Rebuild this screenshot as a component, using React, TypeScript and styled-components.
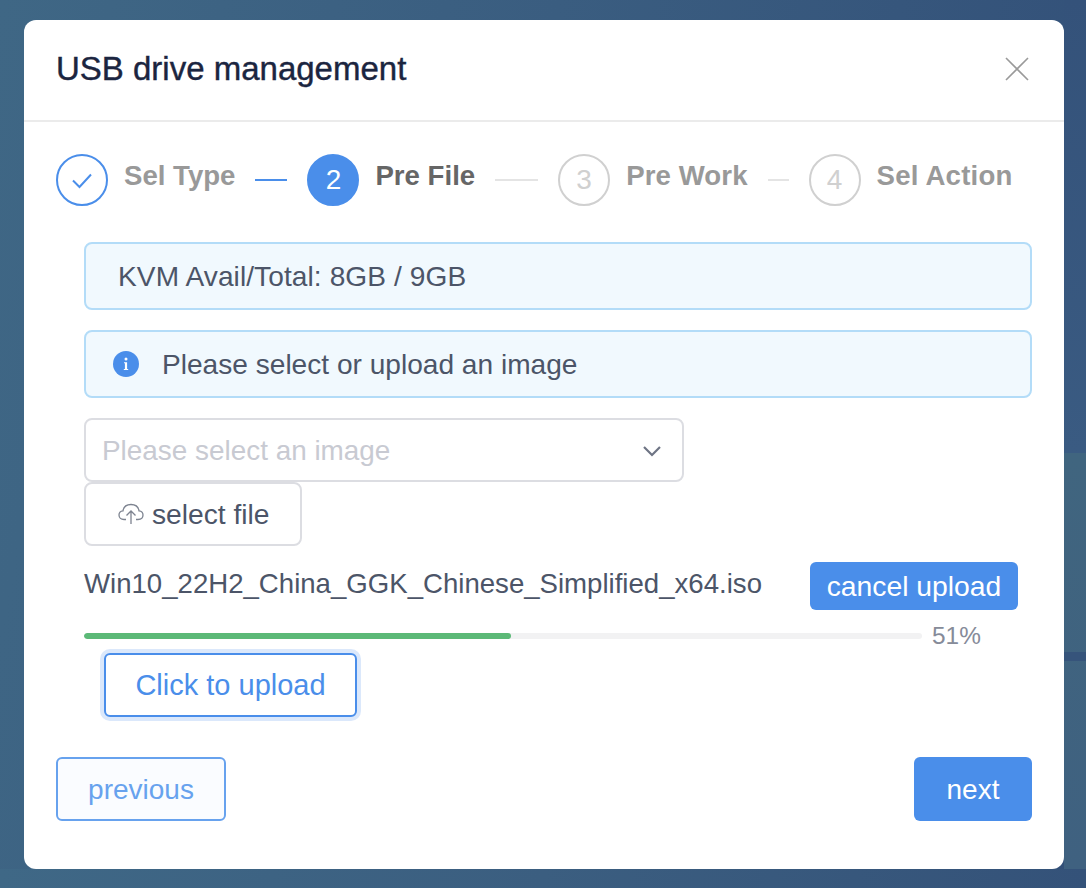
import React from "react";
import styled, { createGlobalStyle } from "styled-components";

const Global = createGlobalStyle`
  html, body { margin: 0; padding: 0; }
  body { font-family: "Liberation Sans", Arial, sans-serif; }
  * { box-sizing: border-box; }
`;

const Page = styled.div`
  width: 1086px;
  height: 888px;
  overflow: hidden;
  padding: 20px 22px 19px 24px;
  background:
    linear-gradient(#36547b, #36547b) right 0 top 652px / 22px 9px no-repeat,
    linear-gradient(180deg, #40657f, #3f6180) right 0 top 453px / 22px 416px no-repeat,
    linear-gradient(180deg, #34527a, #3a5b82) right 0 top 0 / 22px 453px no-repeat,
    linear-gradient(90deg, #3f6886 0%, #3b5e80 50%, #345279 100%) left 0 bottom 0 / 100% 19px no-repeat,
    linear-gradient(100deg, #3f6785 0%, #3a5d80 45%, #324f78 100%);
`;

const Modal = styled.div`
  width: 1040px;
  height: 849px;
  background: #fff;
  border-radius: 12px;
  display: flex;
  flex-direction: column;
`;

const Header = styled.header`
  height: 102px;
  flex: none;
  padding: 0 35px 0 32px;
  border-bottom: 2px solid #ebebeb;
  display: flex;
  align-items: center;
  justify-content: space-between;
`;

const Title = styled.h1`
  margin: 0 0 2px;
  font-size: 33px;
  font-weight: 500;
  line-height: 40px;
  color: #1b2540;
  -webkit-text-stroke: 0.4px #1b2540;
`;

const CloseIcon = styled.svg`
  width: 24px;
  height: 24px;
  margin-bottom: 3px;
  color: #9a9a9a;
`;

const Body = styled.div`
  flex: 1;
  display: flex;
  flex-direction: column;
  padding: 32px 32px 48px;
`;

const Steps = styled.ol`
  list-style: none;
  margin: 0;
  padding: 0;
  display: flex;
  align-items: flex-start;
  height: 52px;
`;

const Step = styled.li`
  display: flex;
  align-items: flex-start;
`;

const Circle = styled.span<{ $state: "done" | "active" | "todo" }>`
  width: 52px;
  height: 52px;
  flex: none;
  border-radius: 50%;
  display: flex;
  align-items: center;
  justify-content: center;
  font-size: 28px;
  color: ${p => (p.$state === "active" ? "#fff" : p.$state === "done" ? "#4a8eea" : "#d0d0d0")};
  background: ${p => (p.$state === "active" ? "#4a8eea" : "#fff")};
  border: 2px solid ${p => (p.$state === "todo" ? "#d0d0d0" : "#4a8eea")};
`;

const StepLabel = styled.span<{ $active?: boolean; $spacing?: number }>`
  margin-left: 16px;
  font-size: 27.6px;
  line-height: 44px;
  font-weight: 700;
  white-space: nowrap;
  letter-spacing: ${p => p.$spacing ?? 0}px;
  color: ${p => (p.$active ? "#666" : "#999")};
`;

const Connector = styled.span<{ $w: number; $done?: boolean }>`
  width: ${p => p.$w}px;
  height: 2px;
  margin: 25px 20px 0;
  flex: none;
  background: ${p => (p.$done ? "#4a8eea" : "#e4e4e4")};
`;

const Content = styled.div`
  margin-top: 36px;
  padding-left: 28px;
  display: flex;
  flex-direction: column;
  flex: 1;
`;

const Alert = styled.div<{ $icon?: boolean }>`
  height: 68px;
  margin-bottom: 20px;
  padding: 2px 0 0 ${p => (p.$icon ? 27 : 32)}px;
  display: flex;
  align-items: center;
  gap: 23px;
  font-size: 28.1px;
  letter-spacing: ${p => (p.$icon ? 0 : 0.08)}px;
  color: #4c5568;
  background: #f1f9fe;
  border: 2px solid #b3dcf8;
  border-radius: 8px;
`;

const InfoIcon = styled.svg`
  flex: none;
  margin-top: -2px;
`;

const Select = styled.div`
  width: 600px;
  height: 64px;
  padding: 2px 20px 0 16px;
  display: flex;
  align-items: center;
  justify-content: space-between;
  font-size: 27.9px;
  color: #c8cad2;
  background: #fff;
  border: 2px solid #dcdde2;
  border-radius: 8px;
`;

const FileButton = styled.button`
  width: 218px;
  height: 64px;
  padding: 0 0 0 32px;
  display: flex;
  align-items: center;
  gap: 8px;
  font: inherit;
  font-size: 28.2px;
  color: #4c5568;
  background: #fff;
  border: 2px solid #dcdde2;
  border-radius: 8px;
`;

const FileRow = styled.div`
  margin-top: 16px;
  display: flex;
  align-items: flex-start;
  justify-content: space-between;
  padding-right: 14px;
`;

const FileName = styled.span`
  font-size: 27.6px;
  line-height: 44px;
  color: #4c5568;
`;

const CancelButton = styled.button`
  width: 208px;
  height: 48px;
  padding: 0;
  border: 0;
  border-radius: 6px;
  font: inherit;
  font-size: 28.3px;
  color: #fff;
  background: #4a8eea;
`;

const ProgressRow = styled.div`
  height: 28px;
  margin-top: 12px;
  display: flex;
  align-items: center;
`;

const Track = styled.div`
  width: 838px;
  height: 6px;
  border-radius: 3px;
  background: #f2f2f3;
  overflow: hidden;
`;

const Fill = styled.div`
  height: 100%;
  border-radius: 3px;
  background: #5cb977;
`;

const Percent = styled.span`
  margin-left: 10px;
  font-size: 24.4px;
  color: #868b99;
`;

const UploadButton = styled.button`
  width: 253px;
  height: 64px;
  margin: 3px 0 0 20px;
  padding: 0;
  font: inherit;
  font-size: 29px;
  color: #4a8eea;
  background: #fff;
  border: 2px solid #4a8eea;
  border-radius: 6px;
  box-shadow: 0 0 0 4px #dbe8fb;
`;

const Footer = styled.footer`
  display: flex;
  justify-content: space-between;
  margin-top: auto;
`;

const PrevButton = styled.button`
  width: 170px;
  height: 64px;
  padding: 2px 0 0;
  font: inherit;
  font-size: 28px;
  color: #67a2ee;
  background: #fafcff;
  border: 2px solid #67a2ee;
  border-radius: 6px;
`;

const NextButton = styled.button`
  width: 118px;
  height: 64px;
  padding: 2px 0 0;
  border: 0;
  border-radius: 6px;
  font: inherit;
  font-size: 28px;
  color: #fff;
  background: #4a8eea;
`;

export default function App() {
  const progress = 51;
  return (
    <Page>
      <Global />
      <Modal>
        <Header>
          <Title>USB drive management</Title>
          <CloseIcon viewBox="0 0 24 24" fill="none" stroke="currentColor" strokeWidth="1.6">
            <path d="M1 1 L23 23 M23 1 L1 23" />
          </CloseIcon>
        </Header>
        <Body>
          <Steps>
            <Step>
              <Circle $state="done">
                <svg width="22" height="22" viewBox="0 0 22 22" fill="none" stroke="currentColor" strokeWidth="2">
                  <path d="M2 11.5 L8.5 18 L20 5.5" />
                </svg>
              </Circle>
              <StepLabel>Sel Type</StepLabel>
              <Connector $w={32} $done />
            </Step>
            <Step>
              <Circle $state="active">2</Circle>
              <StepLabel $active>Pre File</StepLabel>
              <Connector $w={43} />
            </Step>
            <Step>
              <Circle $state="todo">3</Circle>
              <StepLabel $spacing={0.1}>Pre Work</StepLabel>
              <Connector $w={21} />
            </Step>
            <Step>
              <Circle $state="todo">4</Circle>
              <StepLabel $spacing={0.2}>Sel Action</StepLabel>
            </Step>
          </Steps>
          <Content>
            <Alert>KVM Avail/Total: 8GB / 9GB</Alert>
            <Alert $icon>
              <InfoIcon width="26" height="26" viewBox="0 0 26 26">
                <circle cx="13" cy="13" r="13" fill="#4a8eea" />
                <circle cx="13" cy="8" r="1.5" fill="#fff" />
                <path d="M11 11.2h3.1v6.8h1.1v1h-4.4v-1h1.1v-5.8h-.9z" fill="#fff" />
              </InfoIcon>
              Please select or upload an image
            </Alert>
            <Select>
              Please select an image
              <svg width="20" height="12" viewBox="0 0 20 12" fill="none" stroke="#6e7484" strokeWidth="2.2">
                <path d="M2 2 L10 10 L18 2" />
              </svg>
            </Select>
            <FileButton>
              <svg width="26" height="22" viewBox="0 0 26 22" fill="none" stroke="#7d8390" strokeWidth="1.3">
                <path d="M8 16.5 H6 C3 16.5 1 14.6 1 12 C1 9.8 2.8 8 5 7.8 C5.6 4 8.8 1.5 13 1.5 C17.2 1.5 20.4 4 21 7.8 C23.2 8 25 9.8 25 12 C25 14.6 23 16.5 20 16.5 H18" />
                <path d="M13 21 V8.5 M8.5 12.5 L13 8 L17.5 12.5" />
              </svg>
              select file
            </FileButton>
            <FileRow>
              <FileName>Win10_22H2_China_GGK_Chinese_Simplified_x64.iso</FileName>
              <CancelButton>cancel upload</CancelButton>
            </FileRow>
            <ProgressRow>
              <Track>
                <Fill style={{ width: `${progress}%` }} />
              </Track>
              <Percent>{progress}%</Percent>
            </ProgressRow>
            <UploadButton>Click to upload</UploadButton>
          </Content>
          <Footer>
            <PrevButton>previous</PrevButton>
            <NextButton>next</NextButton>
          </Footer>
        </Body>
      </Modal>
    </Page>
  );
}
